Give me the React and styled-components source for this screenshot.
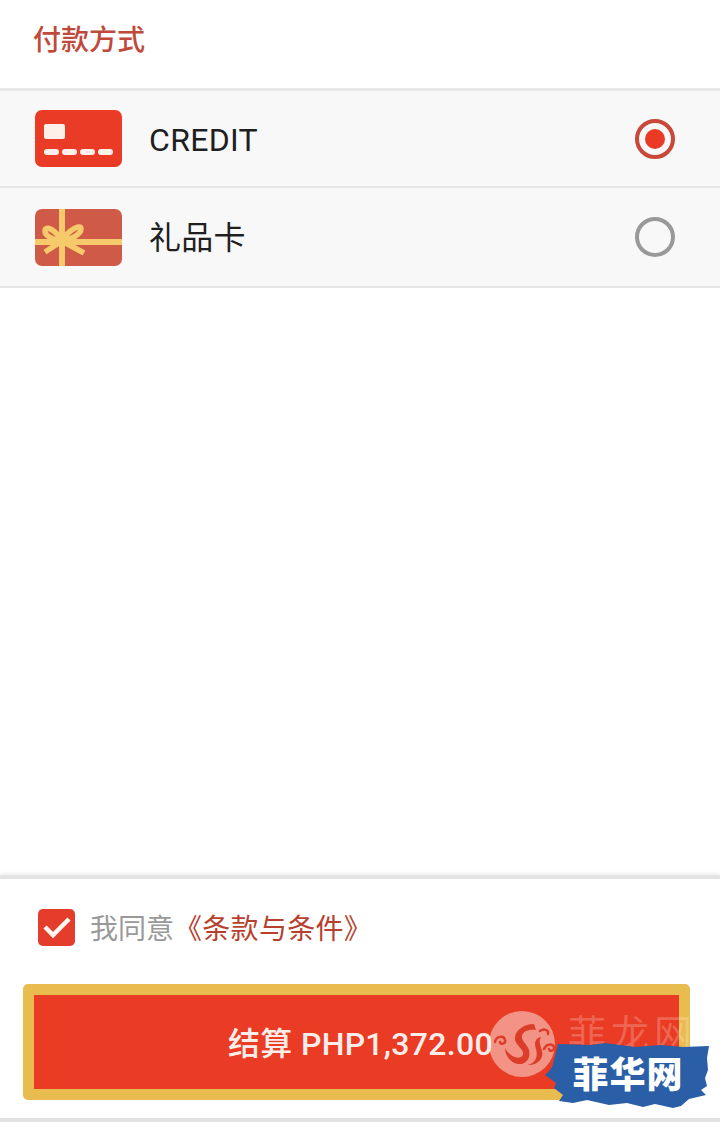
import React from "react";
import styled, { createGlobalStyle } from "styled-components";

const GlobalStyle = createGlobalStyle`
html, body {
    margin: 0;
    padding: 0;
    background: #ffffff;
    font-family: Roboto, "Noto Sans CJK SC", sans-serif;
}
`;

const Page = styled.div`
width: 720px;
height: 1122px;
display: flex;
flex-direction: column;
overflow: hidden;
position: relative;
background: #ffffff;
`;

const Header = styled.div`
height: 91px;
box-sizing: border-box;
padding: 21px 0 0 33px;
font-size: 28px;
font-weight: 500;
line-height: 40px;
color: #bf4a3c;
border-bottom: 3px solid #e8e8e8;
`;

const MethodRow = styled.div`
height: ${(p) => p.$height}px;
box-sizing: border-box;
display: flex;
align-items: center;
padding: 0 45px 0 35px;
background: #f8f8f9;
border-bottom: 2px solid #e6e6e6;
`;

const CardIcon = styled.svg`
width: 87px;
height: 57px;
flex: none;
`;

const MethodName = styled.span`
flex: 1;
margin-left: 27px;
padding-top: 2px;
font-size: 32px;
line-height: 40px;
letter-spacing: 0.3px;
color: #1f1f1f;
`;

const Radio = styled.span`
width: 40px;
height: 40px;
box-sizing: border-box;
border-radius: 50%;
border: 4px solid ${(p) => (p.$checked ? "#c8483a" : "#999999")};
display: flex;
align-items: center;
justify-content: center;
&::after {
    content: "";
    width: 20px;
    height: 20px;
    border-radius: 50%;
    background: ${(p) => (p.$checked ? "#e93a25" : "transparent")};
}
`;

const Spacer = styled.div`
flex: 1;
`;

const Footer = styled.div`
position: relative;
height: 247px;
box-sizing: border-box;
padding: 29px 30px 0 23px;
border-top: 4px solid #e4e4e4;
box-shadow: 0 -2px 3px rgba(0, 0, 0, 0.06);
&::after {
    content: "";
    position: absolute;
    left: 0;
    right: 0;
    bottom: 0;
    height: 4px;
    background: #e2e2e2;
}
`;

const Agreement = styled.div`
display: flex;
align-items: center;
padding-left: 15px;
height: 38px;
margin-bottom: 38px;
font-size: 28px;
color: #999999;
`;

const Check = styled.span`
width: 37px;
height: 37px;
flex: none;
margin-right: 15px;
border-radius: 5px;
background: #e43d2b;
display: flex;
align-items: center;
justify-content: center;
`;

const Terms = styled.span`
letter-spacing: 0.3px;
color: #b7412f;
`;

const PayButton = styled.button`
display: block;
width: 667px;
height: 116px;
box-sizing: border-box;
border: 11px solid #e9bc50;
border-radius: 5px;
background: #ea3b24;
color: #fbeeea;
font-family: inherit;
font-size: 32px;
font-weight: 500;
letter-spacing: 0.3px;
padding: 0 0 2px 8px;
`;

const Stamp = styled.div`
position: absolute;
left: 489px;
top: 132px;
width: 66px;
height: 66px;
border-radius: 50%;
background: rgba(255, 255, 255, 0.45);
`;

const StampDragon = styled.svg`
position: absolute;
left: 5px;
top: 12px;
width: 64px;
height: 44px;
`;

const StampText = styled.div`
position: absolute;
left: 568px;
top: 130px;
font-size: 38px;
line-height: 50px;
letter-spacing: 5px;
font-weight: 400;
color: rgba(255, 255, 255, 0.22);
white-space: nowrap;
`;

const Brush = styled.div`
position: absolute;
left: 543px;
top: 163px;
width: 170px;
height: 70px;
display: flex;
align-items: center;
justify-content: center;
`;

const BrushShape = styled.svg`
position: absolute;
inset: 0;
width: 100%;
height: 100%;
`;

const BrushText = styled.span`
position: relative;
font-size: 36px;
line-height: 40px;
font-weight: 900;
color: #ffffff;
letter-spacing: 1px;
margin-top: -3px;
`;

function CreditIcon() {
    return <CardIcon viewBox="0 0 87 57">
        <rect width="87" height="57" rx="7" fill="#e93b25" />
        <rect x="9" y="14" width="21" height="15" rx="2" fill="#fdf0ea" />
        <rect x="9" y="39" width="15" height="6" rx="3" fill="#fdf0ea" />
        <rect x="27" y="39" width="15" height="6" rx="3" fill="#fdf0ea" />
        <rect x="45" y="39" width="15" height="6" rx="3" fill="#fdf0ea" />
        <rect x="63" y="39" width="15" height="6" rx="3" fill="#fdf0ea" />
    </CardIcon>;
}

function GiftIcon() {
    return <CardIcon viewBox="0 0 87 57">
        <rect width="87" height="57" rx="7" fill="#cf5a48" />
        <rect x="24" width="6" height="57" fill="#f6c96b" />
        <rect y="30" width="87" height="6" fill="#f6c96b" />
        <path d="M27 32 C20 20 10 16 10 22 C10 28 20 31 27 32 C34 31 46 26 46 20 C46 15 34 20 27 32 Z" fill="none" stroke="#f6c96b" strokeWidth="5.5" strokeLinejoin="round" />
        <path d="M27 32 L10 43 M27 32 L49 44" fill="none" stroke="#f6c96b" strokeWidth="5.5" />
    </CardIcon>;
}

function Dragon() {
    return <StampDragon viewBox="0 0 64 44">
        <path d="M40 1 C30 1 22 7 21 14 C20 21 27 24 29 29 C30 33 26 36 21 34 C16 32 13 29 11 25 C11 32 16 40 24 41 C32 42 37 35 35 27 C33 21 27 18 28 13 C29 8 35 6 42 7 Z" fill="#dc3d29" />
        <path d="M33 42 C42 41 44 33 42 26 C40 20 41 15 47 14 C44 19 47 23 48 28 C50 35 44 43 33 42 Z" fill="#dc3d29" />
        <path d="M1 19 C2 13 10 12 11 17 C12 21 6 22 6 19 M50 26 C52 21 58 20 60 24 C61 28 56 29 55 26 M46 8 C50 5 55 7 54 11" fill="none" stroke="#dc3d29" strokeWidth="2.5" strokeLinecap="round" />
    </StampDragon>;
}

export default function App() {
    return <Page>
        <GlobalStyle />
        <Header>付款方式</Header>
        <MethodRow $height={97}>
            <CreditIcon />
            <MethodName>CREDIT</MethodName>
            <Radio $checked />
        </MethodRow>
        <MethodRow $height={100}>
            <GiftIcon />
            <MethodName>礼品卡</MethodName>
            <Radio />
        </MethodRow>
        <Spacer />
        <Footer>
            <Agreement>
                <Check>
                    <svg width="30" height="24" viewBox="0 0 30 24">
                        <path d="M3 12 L11 20 L27 4" fill="none" stroke="#fff6f2" strokeWidth="4.5" />
                    </svg>
                </Check>
                我同意<Terms>《条款与条件》</Terms>
            </Agreement>
            <PayButton>结算 PHP1,372.00</PayButton>
            <StampText>菲龙网</StampText>
            <Stamp>
                <Dragon />
            </Stamp>
            <Brush>
                <BrushShape viewBox="0 0 170 70">
                    <path d="M15 2 L48 3 L62 1 L92 5 L118 3 L140 5 L166 4 L164 16 L165 28 L162 36 L164 44 L158 48 L163 53 L146 57 L138 64 L130 66 L112 62 L100 65 L84 61 L66 63 L44 58 L30 61 L16 59 L20 53 L11 46 L13 41 L2 33 L6 29 L9 25 L12 14 Z" fill="#2a5fa8" />
                </BrushShape>
                <BrushText>菲华网</BrushText>
            </Brush>
        </Footer>
    </Page>;
}
